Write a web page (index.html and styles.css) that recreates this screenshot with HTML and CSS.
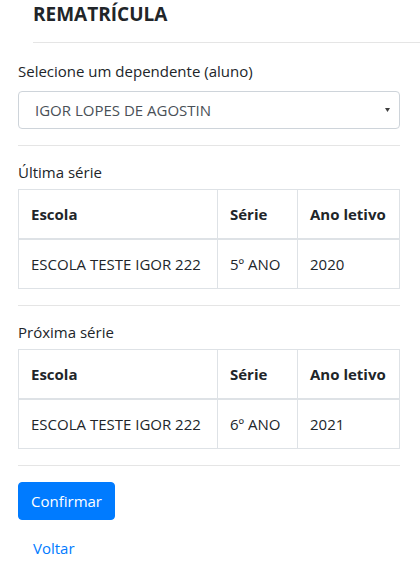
FILE: index.html
```html
<!DOCTYPE html>
<html lang="pt-BR">
<head>
<meta charset="utf-8">
<title>Rematrícula</title>
<link rel="stylesheet" href="styles.css">
</head>
<body>
<div class="page">
  <div class="header">
    <h5 class="title">REMATRÍCULA</h5>
    <hr class="rule">
  </div>

  <div class="form-group">
    <label class="label">Selecione um dependente (aluno)</label>
    <div class="select">
      <span class="select-text">IGOR LOPES DE AGOSTIN</span>
      <svg class="caret" width="5" height="4" viewBox="0 0 5 4"><path d="M0 0H5L2.5 4Z" fill="#3f3f3f"/></svg>
    </div>
  </div>

  <hr class="rule">

  <p class="section-label">Última série</p>
  <table class="table">
    <colgroup><col class="c1"><col class="c2"><col class="c3"></colgroup>
    <thead>
      <tr><th>Escola</th><th>Série</th><th>Ano letivo</th></tr>
    </thead>
    <tbody>
      <tr><td>ESCOLA TESTE IGOR 222</td><td>5º ANO</td><td>2020</td></tr>
    </tbody>
  </table>

  <hr class="rule">

  <p class="section-label">Próxima série</p>
  <table class="table">
    <colgroup><col class="c1"><col class="c2"><col class="c3"></colgroup>
    <thead>
      <tr><th>Escola</th><th>Série</th><th>Ano letivo</th></tr>
    </thead>
    <tbody>
      <tr><td>ESCOLA TESTE IGOR 222</td><td>6º ANO</td><td>2021</td></tr>
    </tbody>
  </table>

  <hr class="rule">

  <div class="actions">
    <button class="btn btn-primary" type="button">Confirmar</button>
    <button class="btn btn-link" type="button">Voltar</button>
  </div>
</div>
</body>
</html>
```

FILE: styles.css
```css
* { box-sizing: border-box; }
html, body { margin: 0; padding: 0; background: #fff; }
body {
  font-family: "Open Sans", "Noto Sans", "Liberation Sans", sans-serif;
  font-size: 15px;
  line-height: 24px;
  color: #212529;
}
.page { padding: 0 20px 0 18px; }
.header { margin: 0 -20px 0 15px; }
.title {
  margin: 2px 0 0 0;
  font-size: 19px;
  line-height: 24px;
  font-weight: 700;
  color: #212529;
}
.rule {
  border: 0;
  border-top: 1px solid rgba(0,0,0,.1);
  margin: 16px 0;
  height: 0;
}
.form-group { margin-bottom: 16px; }
.label { display: block; margin-bottom: 8px; }
.select {
  display: flex;
  align-items: center;
  justify-content: space-between;
  height: 38px;
  padding: 0 9px 0 16px;
  border: 1px solid #ced4da;
  border-radius: 4px;
  color: #495057;
}
.caret { display: block; }
.section-label { margin: -2px 0 5px 0; }
.table {
  width: 100%;
  border-collapse: collapse;
  table-layout: fixed;
  margin-bottom: 16px;
}
.c1 { width: 199px; }
.c2 { width: 80px; }
.c3 { width: auto; }
.table th, .table td {
  border: 1px solid #dee2e6;
  padding: 12px;
  text-align: left;
  white-space: nowrap;
  vertical-align: top;
}
.table th { font-weight: 700; }
.table thead th { border-bottom: 2px solid #dee2e6; }
.actions { display: flex; flex-direction: column; align-items: flex-start; gap: 9px; }
.btn {
  font-family: inherit;
  font-size: 15px;
  line-height: 24px;
  padding: 6px 12px;
  border: 1px solid transparent;
  border-radius: 4px;
  cursor: pointer;
}
.btn-primary { background: #007bff; border-color: #007bff; color: #fff; }
.btn-link { background: transparent; color: #007bff; padding-left: 14px; }
```
